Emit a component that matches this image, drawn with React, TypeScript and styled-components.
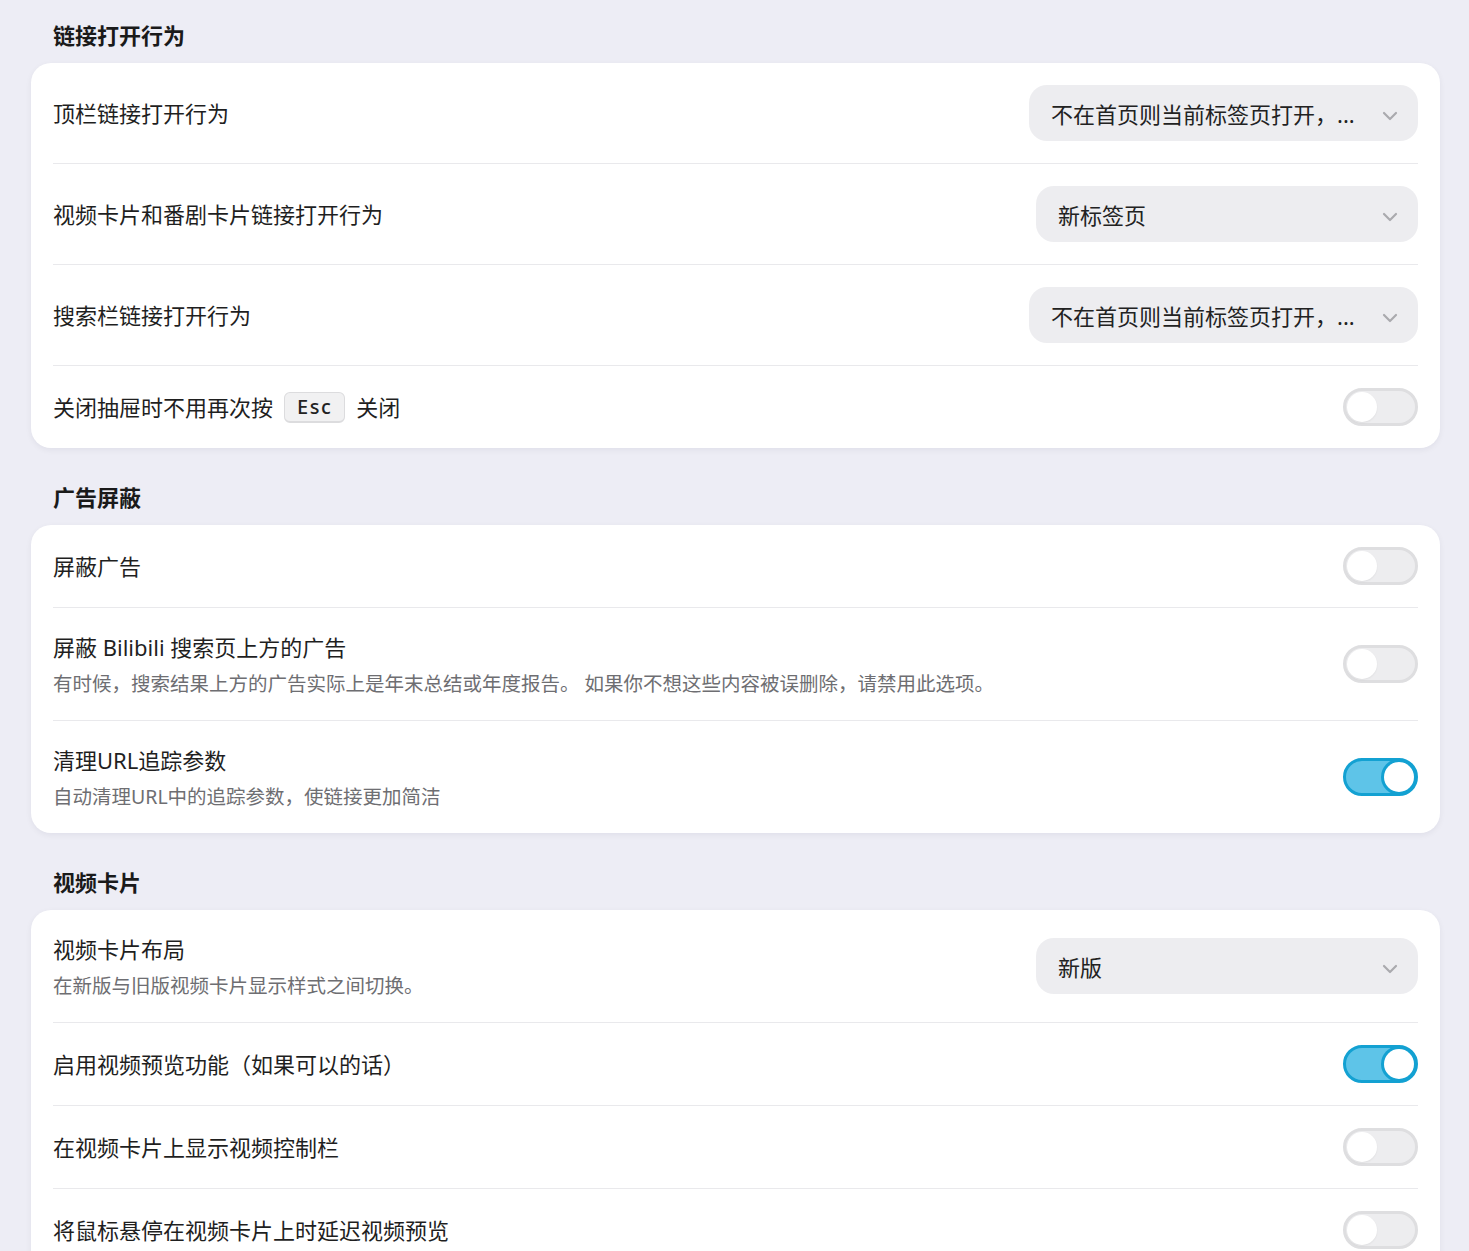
import React from 'react';
import styled, { createGlobalStyle } from 'styled-components';

const GlobalStyle = createGlobalStyle`
  html, body {
    margin: 0;
    padding: 0;
    background: #ededf5;
    font-family: "Noto Sans", "Noto Sans CJK SC", sans-serif;
    color: #1f1f1f;
  }
`;

const Page = styled.div`
  display: flex;
  flex-direction: column;
  gap: 34px;
  padding: 20px 29px 40px 31px;
`;

const Section = styled.section`
  display: flex;
  flex-direction: column;
  gap: 13px;
`;

const SectionTitle = styled.h2`
  margin: 0;
  padding-left: 22px;
  font-size: 22px;
  line-height: 30px;
  font-weight: 700;
  color: #1a1a1a;
`;

const Card = styled.div`
  background: #ffffff;
  border-radius: 20px;
  padding: 0 22px;
  box-shadow: 0 2px 6px rgba(20, 20, 50, 0.06);
`;

const Row = styled.div`
  display: flex;
  align-items: center;
  justify-content: space-between;
  gap: 24px;
  padding: 22px 0;
  & + & {
    border-top: 1px solid #e9e9ec;
  }
`;

const LabelBlock = styled.div`
  display: flex;
  flex-direction: column;
  gap: 5px;
  min-width: 0;
`;

const Label = styled.div`
  font-size: 22px;
  line-height: 34px;
  color: #1f1f1f;
  display: flex;
  align-items: center;
  gap: 11px;
`;

const Desc = styled.div`
  font-size: 19.5px;
  line-height: 29px;
  color: #6e6e72;
`;

const Kbd = styled.kbd`
  display: inline-flex;
  align-items: center;
  justify-content: center;
  height: 31px;
  padding: 0 12px;
  box-sizing: border-box;
  background: #f1f1f2;
  border: 1px solid #dcdcde;
  border-bottom-width: 2px;
  border-radius: 6px;
  font-family: "Noto Sans", sans-serif;
  font-size: 20px;
  font-weight: 500;
  letter-spacing: 1.5px;
  color: #222;
`;

const Select = styled.div<{ $width: number }>`
  flex: none;
  width: ${(p) => p.$width}px;
  height: 56px;
  box-sizing: border-box;
  display: flex;
  align-items: center;
  justify-content: space-between;
  padding: 0 20px 0 22px;
  background: #ededf0;
  border-radius: 18px;
`;

const SelectText = styled.span`
  font-size: 22px;
  color: #222;
  white-space: nowrap;
  overflow: hidden;
`;

const Chevron = styled.svg`
  flex: none;
  margin-top: 6px;
`;

const Toggle = styled.div<{ $on: boolean }>`
  flex: none;
  position: relative;
  width: 75px;
  height: 38px;
  box-sizing: border-box;
  border-radius: 19px;
  border: 3px solid ${(p) => (p.$on ? '#13a1d2' : '#dedee0')};
  background: ${(p) => (p.$on ? '#5ec4e8' : '#ededef')};
`;

const Knob = styled.div<{ $on: boolean }>`
  position: absolute;
  top: 1px;
  left: ${(p) => (p.$on ? '38px' : '1px')};
  width: 30px;
  height: 30px;
  border-radius: 50%;
  background: #ffffff;
  box-shadow: ${(p) => (p.$on ? '0 0 0 3px #13a1d2' : '0 1px 2px rgba(0,0,0,0.06)')};
`;

type Setting =
  | { kind: 'select'; label: React.ReactNode; desc?: string; value: string; width: number }
  | { kind: 'toggle'; label: React.ReactNode; desc?: string; on?: boolean };

const sections: { title: string; items: Setting[] }[] = [
  {
    title: '链接打开行为',
    items: [
      { kind: 'select', label: '顶栏链接打开行为', value: '不在首页则当前标签页打开，...', width: 389 },
      { kind: 'select', label: '视频卡片和番剧卡片链接打开行为', value: '新标签页', width: 382 },
      { kind: 'select', label: '搜索栏链接打开行为', value: '不在首页则当前标签页打开，...', width: 389 },
      {
        kind: 'toggle',
        label: (
          <>
            <span>关闭抽屉时不用再次按</span>
            <Kbd>Esc</Kbd>
            <span>关闭</span>
          </>
        ),
      },
    ],
  },
  {
    title: '广告屏蔽',
    items: [
      { kind: 'toggle', label: '屏蔽广告' },
      {
        kind: 'toggle',
        label: '屏蔽 Bilibili 搜索页上方的广告',
        desc: '有时候，搜索结果上方的广告实际上是年末总结或年度报告。 如果你不想这些内容被误删除，请禁用此选项。',
      },
      { kind: 'toggle', label: '清理URL追踪参数', desc: '自动清理URL中的追踪参数，使链接更加简洁', on: true },
    ],
  },
  {
    title: '视频卡片',
    items: [
      { kind: 'select', label: '视频卡片布局', desc: '在新版与旧版视频卡片显示样式之间切换。', value: '新版', width: 382 },
      { kind: 'toggle', label: '启用视频预览功能（如果可以的话）', on: true },
      { kind: 'toggle', label: '在视频卡片上显示视频控制栏' },
      { kind: 'toggle', label: '将鼠标悬停在视频卡片上时延迟视频预览' },
    ],
  },
];

const App: React.FC = () => {
  return (
    <>
      <GlobalStyle />
      <Page>
        {sections.map((section) => (
          <Section key={section.title}>
            <SectionTitle>{section.title}</SectionTitle>
            <Card>
              {section.items.map((item, i) => (
                <Row key={i}>
                  <LabelBlock>
                    <Label>{item.label}</Label>
                    {item.desc && <Desc>{item.desc}</Desc>}
                  </LabelBlock>
                  {item.kind === 'select' ? (
                    <Select $width={item.width}>
                      <SelectText>{item.value}</SelectText>
                      <Chevron width="16" height="10" viewBox="0 0 16 10" fill="none">
                        <path d="M2 2l6 6 6-6" stroke="#aaaaae" strokeWidth="2.2" strokeLinecap="round" strokeLinejoin="round" />
                      </Chevron>
                    </Select>
                  ) : (
                    <Toggle $on={!!item.on}>
                      <Knob $on={!!item.on} />
                    </Toggle>
                  )}
                </Row>
              ))}
            </Card>
          </Section>
        ))}
      </Page>
    </>
  );
};

export default App;
